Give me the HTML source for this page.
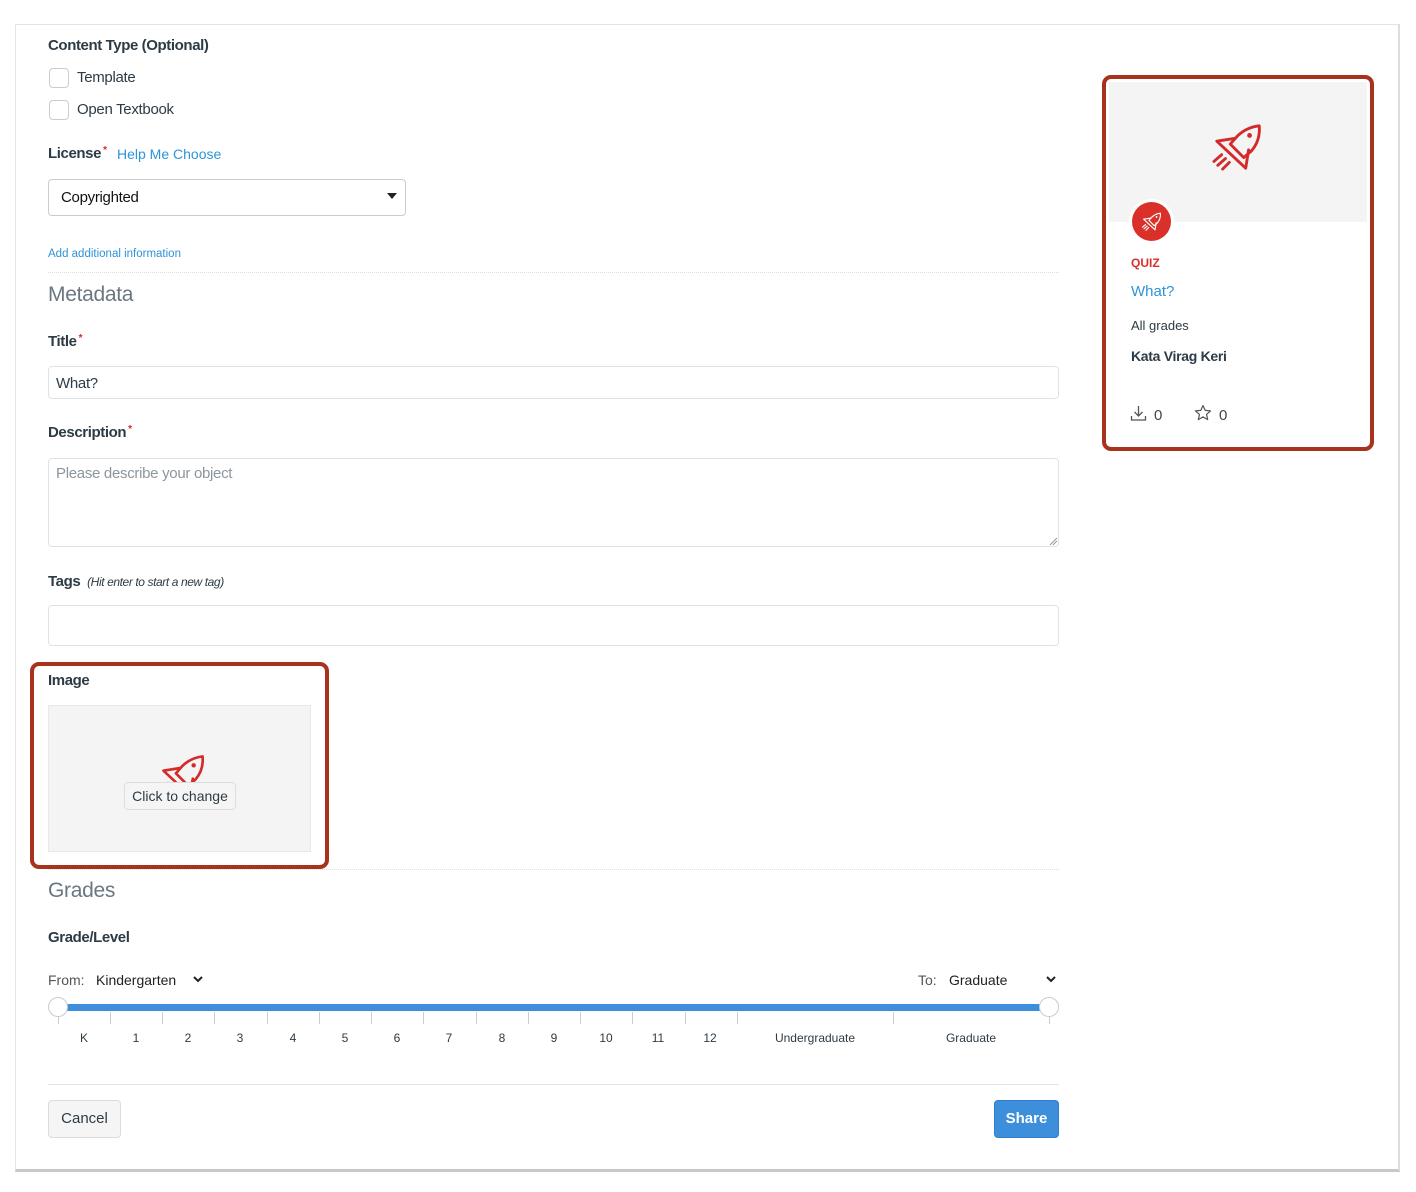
<!DOCTYPE html>
<html><head><meta charset="utf-8">
<style>
*{box-sizing:border-box;margin:0;padding:0}
body{width:1416px;height:1192px;background:#fff;font-family:"Liberation Sans",sans-serif;color:#2d3b45;position:relative;overflow:hidden}
.a{position:absolute;white-space:nowrap}
.frame{position:absolute;left:15px;top:24px;width:1385px;height:1148px;border:1px solid #e4e4e4;border-right:2px solid #ddd;border-bottom:3px solid #c8c8c8;background:#fff}
.lbl{font-size:15px;font-weight:bold;letter-spacing:-0.4px;color:#2d3b45}
.req{color:#e0261c;font-size:10px;vertical-align:top;margin-left:2px}
.cb{position:absolute;width:20px;height:20px;border:1px solid #c7cdd1;border-radius:4px;background:#fff}
.txt{font-size:15px;color:#2d3b45;letter-spacing:-0.3px}
.inp{position:absolute;border:1px solid #dfe3e6;border-radius:4px;background:#fff}
.hr{position:absolute;left:48px;width:1011px;border-top:1px dotted #ddd}
.h2{font-size:21px;color:#6b7780;font-weight:normal;letter-spacing:-0.3px}
.red{position:absolute;border:4px solid #a8331d;border-radius:9px}
.tick{position:absolute;top:1012px;width:1px;height:12px;background:#c7cdd1}
.tl{position:absolute;top:1031px;font-size:12px;color:#2d3b45;transform:translateX(-50%)}
</style></head><body>
<svg width="0" height="0" style="position:absolute">
<defs>
<symbol id="rk" viewBox="10 4 58 54">
<g fill="none" stroke="currentColor" stroke-width="3" stroke-linejoin="round" stroke-linecap="round">
<path d="M61 9 C52 10 44 14 38 20 L31 28 L45 42 L53 35 C59 28 62 19 61 9 Z"/>
<path d="M36 22 L17 25 L47 53 L50 34"/>
<path d="M22 39 L14 46 M26 43 L18 50 M30 47 L23 54"/>
</g>
<circle cx="51" cy="19" r="2.5" fill="currentColor"/>
</symbol>
</defs></svg>
<div class="frame"></div>

<div class="a lbl" style="left:48px;top:37px">Content Type (Optional)</div>
<div class="cb" style="left:49px;top:68px"></div>
<div class="a txt" style="left:77px;top:69px">Template</div>
<div class="cb" style="left:49px;top:100px"></div>
<div class="a txt" style="left:77px;top:101px">Open Textbook</div>

<div class="a lbl" style="left:48px;top:145px">License<span class="req">*</span></div>
<div class="a" style="left:117px;top:146px;font-size:14px;color:#2d94d8">Help Me Choose</div>
<div class="inp" style="left:48px;top:179px;width:358px;height:37px;border-color:#c7cdd1"></div>
<div class="a txt" style="left:61px;top:189px;color:#111">Copyrighted</div>
<div class="a" style="left:387px;top:193px;width:0;height:0;border-left:5px solid transparent;border-right:5px solid transparent;border-top:6px solid #222"></div>

<div class="a" style="left:48px;top:248px;font-size:11.5px;color:#2d94d8">Add additional information</div>
<div class="hr" style="top:272px"></div>
<div class="a h2" style="left:48px;top:283px">Metadata</div>

<div class="a lbl" style="left:48px;top:333px">Title<span class="req">*</span></div>
<div class="inp" style="left:48px;top:366px;width:1011px;height:33px"></div>
<div class="a txt" style="left:56px;top:375px">What?</div>

<div class="a lbl" style="left:48px;top:424px">Description<span class="req">*</span></div>
<div class="inp" style="left:48px;top:458px;width:1011px;height:89px"></div>
<div class="a txt" style="left:56px;top:465px;color:#8b969e">Please describe your object</div>
<svg class="a" style="left:1049px;top:537px" width="9" height="9"><path d="M1 8 L8 1 M4 8 L8 4" stroke="#999" stroke-width="1"/></svg>

<div class="a lbl" style="left:48px;top:573px">Tags <span style="font-weight:normal;font-style:italic;font-size:12px;color:#2d3b45;margin-left:3px">(Hit enter to start a new tag)</span></div>
<div class="inp" style="left:48px;top:605px;width:1011px;height:41px"></div>

<div class="red" style="left:30px;top:662px;width:299px;height:207px"></div>
<div class="a lbl" style="left:48px;top:672px">Image</div>
<div class="a" style="left:48px;top:705px;width:263px;height:147px;background:#f4f4f4;border:1px solid #e8e8e8;overflow:hidden">
<svg style="position:absolute;left:108px;top:46px;color:#d42a2a" width="52" height="48"><use href="#rk"/></svg>
<div style="position:absolute;left:75px;top:76px;width:112px;height:28px;background:#f5f5f5;border:1px solid #ddd;border-radius:4px;font-size:14px;color:#2d3b45;text-align:center;line-height:26px">Click to change</div>
</div>

<div class="hr" style="top:869px"></div>
<div class="a h2" style="left:48px;top:879px">Grades</div>
<div class="a lbl" style="left:48px;top:929px">Grade/Level</div>

<div class="a" style="left:48px;top:972px;font-size:14px;color:#555">From:</div>
<div class="a" style="left:96px;top:972px;font-size:14px;color:#222">Kindergarten</div>
<svg class="a" style="left:193px;top:976px" width="10" height="7"><path d="M1 1 L5 5 L9 1" stroke="#222" stroke-width="2" fill="none"/></svg>
<div class="a" style="left:918px;top:972px;font-size:14px;color:#555">To:</div>
<div class="a" style="left:949px;top:972px;font-size:14px;color:#222">Graduate</div>
<svg class="a" style="left:1046px;top:976px" width="10" height="7"><path d="M1 1 L5 5 L9 1" stroke="#222" stroke-width="2" fill="none"/></svg>

<div class="a" style="left:58px;top:1004px;width:991px;height:7px;background:#3d8fdc"></div>
<div class="tick" style="left:58px"></div><div class="tick" style="left:110px"></div><div class="tick" style="left:162px"></div><div class="tick" style="left:214px"></div><div class="tick" style="left:267px"></div><div class="tick" style="left:319px"></div><div class="tick" style="left:371px"></div><div class="tick" style="left:423px"></div><div class="tick" style="left:476px"></div><div class="tick" style="left:528px"></div><div class="tick" style="left:580px"></div><div class="tick" style="left:632px"></div><div class="tick" style="left:685px"></div><div class="tick" style="left:737px"></div><div class="tick" style="left:893px"></div><div class="tick" style="left:1049px"></div>
<div class="a" style="left:48px;top:997px;width:20px;height:20px;border-radius:50%;background:#fff;border:1px solid #c7cdd1"></div>
<div class="a" style="left:1039px;top:997px;width:20px;height:20px;border-radius:50%;background:#fff;border:1px solid #c7cdd1"></div>
<div class="tl" style="left:84px">K</div><div class="tl" style="left:136px">1</div><div class="tl" style="left:188px">2</div><div class="tl" style="left:240px">3</div><div class="tl" style="left:293px">4</div><div class="tl" style="left:345px">5</div><div class="tl" style="left:397px">6</div><div class="tl" style="left:449px">7</div><div class="tl" style="left:502px">8</div><div class="tl" style="left:554px">9</div><div class="tl" style="left:606px">10</div><div class="tl" style="left:658px">11</div><div class="tl" style="left:710px">12</div><div class="tl" style="left:815px">Undergraduate</div><div class="tl" style="left:971px">Graduate</div>

<div class="a" style="left:48px;top:1084px;width:1011px;border-top:1px solid #e4e4e4"></div>
<div class="a" style="left:48px;top:1100px;width:73px;height:38px;background:#f5f5f5;border:1px solid #dcdcdc;border-radius:4px;font-size:15px;color:#2d3b45;text-align:center;line-height:36px">Cancel</div>
<div class="a" style="left:994px;top:1100px;width:65px;height:38px;background:#3d8fdc;border:1px solid #2f7fcc;border-radius:4px;font-size:15px;color:#fff;text-align:center;line-height:36px;font-weight:bold">Share</div>

<div class="red" style="left:1102px;top:75px;width:272px;height:376px"></div>
<div class="a" style="left:1109px;top:82px;width:258px;height:140px;background:#f4f4f4"></div>
<svg class="a" style="left:1210px;top:121px;color:#d42a2a" width="56" height="52"><use href="#rk"/></svg>
<div class="a" style="left:1129px;top:199px;width:45px;height:45px;border-radius:50%;background:#fff"></div>
<div class="a" style="left:1132px;top:202px;width:39px;height:39px;border-radius:50%;background:#d9302a"></div>
<svg class="a" style="left:1141px;top:211px;color:#fff" width="22" height="21"><use href="#rk"/></svg>
<div class="a" style="left:1131px;top:256px;font-size:12px;font-weight:bold;color:#d9302a">QUIZ</div>
<div class="a" style="left:1131px;top:283px;font-size:15px;color:#2d94d8">What?</div>
<div class="a" style="left:1131px;top:318px;font-size:13px;color:#2d3b45">All grades</div>
<div class="a" style="left:1131px;top:348px;font-size:14px;font-weight:bold;color:#2d3b45;letter-spacing:-0.3px">Kata Virag Keri</div>
<svg class="a" style="left:1130px;top:405px" width="17" height="17"><path d="M8.5 1 V11 M4.5 7 L8.5 11 L12.5 7 M1.5 11 V15 H15.5 V11" stroke="#555" stroke-width="1.3" fill="none"/></svg>
<div class="a" style="left:1154px;top:407px;font-size:15px;color:#444">0</div>
<svg class="a" style="left:1194px;top:404px" width="18" height="18"><path d="M9 1.5 L11.2 6.4 L16.5 6.9 L12.5 10.4 L13.7 15.6 L9 12.9 L4.3 15.6 L5.5 10.4 L1.5 6.9 L6.8 6.4 Z" stroke="#555" stroke-width="1.2" fill="none" stroke-linejoin="round"/></svg>
<div class="a" style="left:1219px;top:407px;font-size:15px;color:#444">0</div>
</body></html>
